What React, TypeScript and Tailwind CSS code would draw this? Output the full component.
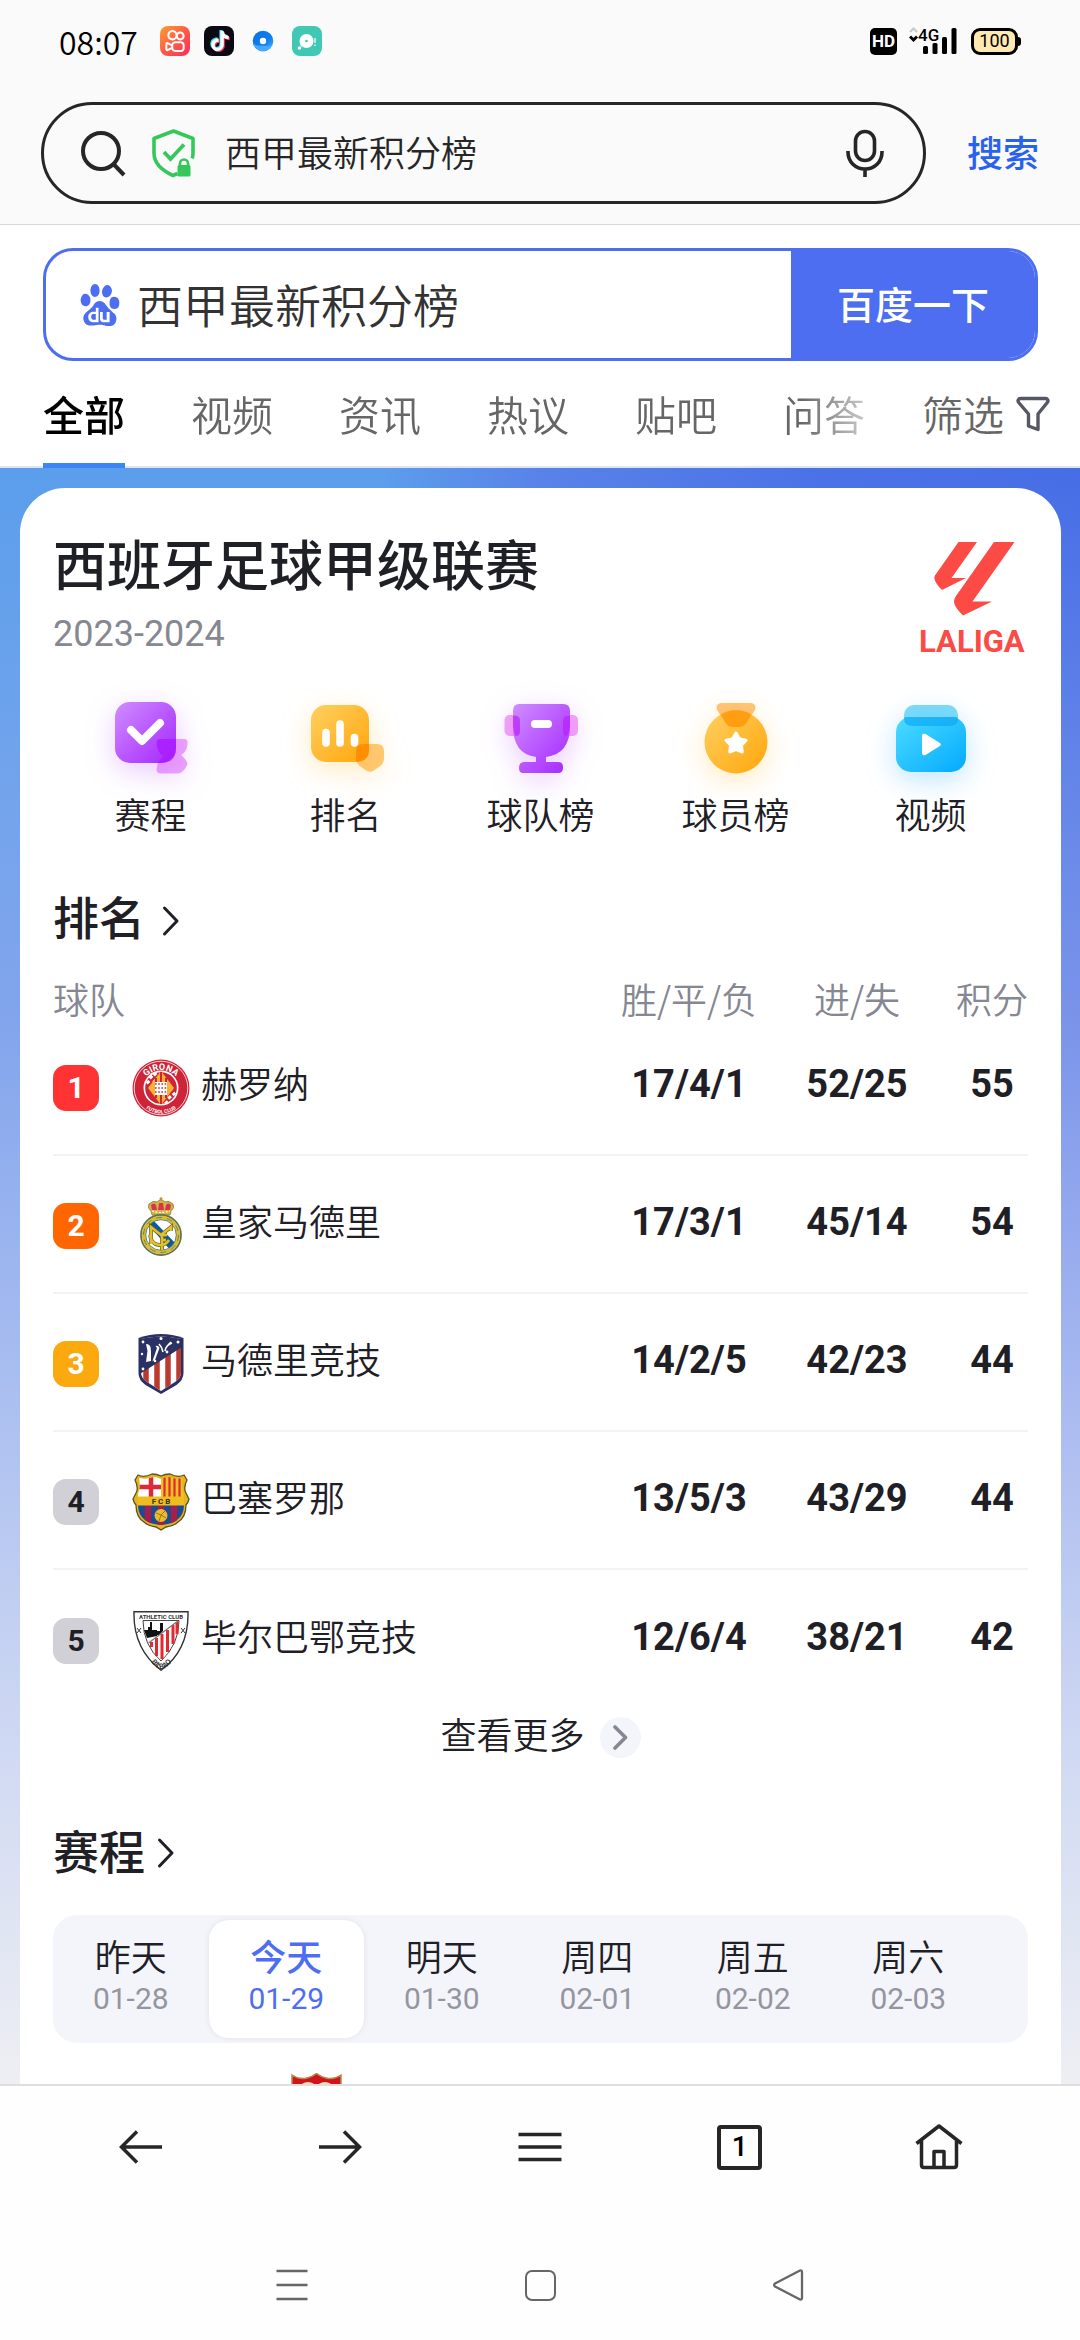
import type { ReactNode } from "react";
import { SiBaidu, SiKuaishou, SiTiktok } from "react-icons/si";

function StatusBar() {
  return (
    <div className="flex h-[82px] items-center justify-between pr-[59px] pl-[59px] text-black">
      <div className="flex items-center">
        <span className="text-[32px] leading-10">08:07</span>
        <div className="ml-[22px] flex items-center gap-[14px]">
          <span className="flex size-[30px] items-center justify-center rounded-lg bg-linear-to-br from-[#ff9a2e] via-[#ff5a44] to-[#ff1f5a]">
            <SiKuaishou className="size-[22px] text-white" />
          </span>
          <span className="relative flex size-[30px] items-center justify-center rounded-lg bg-[#0b0a14]">
            <SiTiktok className="absolute top-[4px] left-[5px] size-[20px] text-[#25f4ee]" />
            <SiTiktok className="absolute top-[6px] left-[7px] size-[20px] text-[#fe2c55]" />
            <SiTiktok className="absolute top-[5px] left-[6px] size-[20px] text-white" />
          </span>
          <svg className="size-[30px]" viewBox="0 0 30 30">
            <defs>
              <linearGradient id="blueDisc" x1="0" y1="0" x2="1" y2="1">
                <stop offset="0" stopColor="#0f6fe0" />
                <stop offset="0.6" stopColor="#0d7ff0" />
                <stop offset="1" stopColor="#4fb4ff" />
              </linearGradient>
            </defs>
            <circle cx="15" cy="15" r="10.300" fill="url(#blueDisc)" />
            <path d="M5 17c3 4 9 2 13 3 3 .5 5-1 6-2-1 5-5 7.300-9 7.300S6 22 5 17z" fill="#46a8ff" />
            <circle cx="15" cy="15" r="3.200" fill="#fff" />
          </svg>
          <svg className="size-[30px]" viewBox="0 0 30 30">
            <rect width="30" height="30" rx="8" fill="#40c8b4" />
            <circle cx="14.500" cy="15" r="7" fill="#fff" />
            <circle cx="7.500" cy="22" r="1.800" fill="#fff" />
            <path d="M9 20l2-2" stroke="#fff" strokeWidth="2" />
            <circle cx="14.500" cy="15" r="1.300" fill="#40c8b4" />
            <path d="M23 12v5M23 18.500v1.500" stroke="#fff" strokeWidth="1.200" />
          </svg>
        </div>
      </div>
      <div className="flex items-center">
        <span className="flex h-[27px] w-[27px] items-center justify-center rounded-[5px] bg-black font-['Roboto',sans-serif] text-[17px] leading-none font-bold text-white">
          HD
        </span>
        <svg className="ml-[12px] h-[40px] w-[50px]" viewBox="0 -6 50 40">
          <path d="M1 5l3.500-3.500L8 5" fill="none" stroke="#c9c9c9" strokeWidth="2.200" />
          <path d="M1 9.500L4.500 13 8 9.500" fill="none" stroke="#000" strokeWidth="3" />
          <text x="9" y="14" fontFamily="Roboto, sans-serif" fontSize="17" fontWeight="500">4G</text>
          <rect x="14" y="19" width="5" height="8" rx="1.500" />
          <rect x="23.500" y="16" width="5" height="11" rx="1.500" />
          <rect x="33" y="10" width="5" height="17" rx="1.500" />
          <rect x="42.500" y="1" width="5" height="26" rx="1.500" />
        </svg>
        <div className="ml-[12px] flex items-center">
          <span className="flex h-[27px] w-[47px] items-center justify-center rounded-[9px] border-[3px] border-black bg-[#ffe9b3] font-['Roboto',sans-serif] text-[18px] leading-none font-normal">
            100
          </span>
          <span className="h-[9px] w-[3px] rounded-r-sm bg-black" />
        </div>
      </div>
    </div>
  );
}

function BrowserBar() {
  return (
    <div className="flex items-center pt-5 pb-5 pl-[41px]">
      <label className="flex h-[102px] flex-1 items-center rounded-full border-[3px] border-[#262626] pr-[38px] pl-[37px]">
        <svg className="size-[48px] shrink-0" viewBox="0 0 48 48" fill="none" stroke="#262626" strokeWidth="4">
          <circle cx="20" cy="22" r="18" />
          <path d="M32 34.500L43 46" />
        </svg>
        <svg className="ml-[22px] h-[50px] w-[46px] shrink-0" viewBox="0 0 46 50">
          <path
            d="M26.500 45.500L22 47.500C10 42 3 35 3 25V10.500L22.500 3 42 10.500V25c0 2-.3 4-.8 5.500"
            fill="none"
            stroke="#35c759"
            strokeWidth="3.600"
            strokeLinejoin="round"
          />
          <path d="M13 24l6.500 7L33 16.500" fill="none" stroke="#35c759" strokeWidth="3.800" />
          <path d="M29 38v-2.500a4 4 0 0 1 8 0V38" fill="none" stroke="#35c759" strokeWidth="2.600" />
          <rect x="26.500" y="37" width="13" height="11.500" rx="1.500" fill="#35c759" />
        </svg>
        <input
          type="text"
          aria-label="网址或搜索词"
          defaultValue="西甲最新积分榜"
          className="ml-[28px] h-[54px] min-w-0 flex-1 bg-transparent pb-1 text-[36px] leading-[50px] text-[#262626] outline-none"
        />
        <button type="button" aria-label="语音搜索">
          <svg className="h-[50px] w-[40px]" viewBox="0 0 40 50" fill="none" stroke="#262626" strokeWidth="3.600">
            <rect x="10.500" y="3.500" width="19" height="29" rx="9.500" />
            <path d="M3 23v1c0 10 7.500 17 17 17s17-7 17-17v-1M20 41v8" />
          </svg>
        </button>
      </label>
      <button type="button" className="w-[154px] pb-1 text-center text-[36px] leading-[50px] font-medium text-[#2a62ee]">
        搜索
      </button>
    </div>
  );
}

function BaiduSearch() {
  return (
    <form className="mt-[23px] mr-[42px] ml-[43px] flex h-[113px] overflow-hidden rounded-[30px] border-[3px] border-[#4e6ef2] bg-white">
      <label className="flex min-w-0 flex-1 items-center pl-[33px]">
        <SiBaidu className="size-[42px] shrink-0 text-[#4e6ef2]" />
        <input
          type="text"
          aria-label="百度搜索"
          defaultValue="西甲最新积分榜"
          className="ml-[16px] min-w-0 flex-1 bg-transparent pb-1 text-[46px] leading-[66px] text-[#333] outline-none"
        />
      </label>
      <button type="submit" className="w-[244px] bg-[#4e6ef2] pb-1 text-[38px] leading-[60px] font-medium text-white">
        百度一下
      </button>
    </form>
  );
}

function Tabs() {
  return (
    <div className="flex h-[107px] shadow-[inset_0_-2px_0_#dfe4ee]">
      <nav className="flex min-w-0 flex-1 gap-[66px] overflow-hidden [mask-image:linear-gradient(to_right,black_800px,transparent_900px)] pl-[43px] text-[41px] whitespace-nowrap text-[#666]">
        <a href="#all" className="flex items-center border-b-[5px] border-[#3a86f5] pt-[3px] font-medium text-black">
          全部
        </a>
        {["视频", "资讯", "热议", "贴吧", "问答"].map((t) => (
          <a key={t} href={"#" + t} className="flex items-center pb-[2px]">
            {t}
          </a>
        ))}
      </nav>
      <button type="button" className="flex items-center pr-[29px] pb-[2px] pl-[20px] text-[41px] text-[#666]">
        筛选
        <svg className="ml-[11px] size-[36px]" viewBox="0 0 36 36" fill="none" stroke="#555862" strokeWidth="3.400" strokeLinejoin="round">
          <path d="M5.500 2.500h25c2.200 0 3.200 2.400 1.800 4L23 18v15.500L13.500 30V18L3.700 6.500c-1.400-1.600-.4-4 1.800-4z" />
        </svg>
      </button>
    </div>
  );
}

function LaLigaLogo() {
  return (
    <svg className="mt-[12px] h-[126px] w-[116px]" viewBox="0 0 116 126" fill="#fc4a45" role="img" aria-label="LALIGA">
      <path d="M46.500 2H65L39.500 38H54L30 50C24 44 20 38 24 34z" />
      <path d="M82 2h20.500L60.500 61.500H80L51 75.500C42 66 40 62 44 56z" />
      <text x="7" y="112" fontFamily="Roboto, sans-serif" fontWeight="700" fontSize="31">LALIGA</text>
    </svg>
  );
}

function Grad({ id, from, to }: { id: string; from: string; to: string }) {
  return (
    <defs>
      <linearGradient id={id} x1="0" y1="0" x2="1" y2="1">
        <stop offset="0" stopColor={from} />
        <stop offset="1" stopColor={to} />
      </linearGradient>
    </defs>
  );
}

const purpleGlow = "size-[76px] overflow-visible drop-shadow-[0_8px_14px_rgba(180,70,255,0.28)]";
const amberGlow = "size-[76px] overflow-visible drop-shadow-[0_8px_14px_rgba(255,180,30,0.28)]";
const blueGlow = "size-[76px] overflow-visible drop-shadow-[0_8px_14px_rgba(20,160,255,0.28)]";

const shortcuts: { label: string; icon: ReactNode }[] = [
  {
    label: "赛程",
    icon: (
      <svg className={purpleGlow} viewBox="0 0 76 76">
        <Grad id="gA" from="#cf8dff" to="#a526ff" />
        <rect x="2" y="2" width="61" height="61" rx="15" fill="url(#gA)" />
        <path
          d="M47 39h24q4 0 3.600 5-.8 8-6.600 11 6 5 6.600 9-4 9-9.600 9.500H48q-4.500 0-4.500-4.500 1-8 6.500-13-6-4-6.500-13 0-4 3.500-4z"
          fill="#d84bff"
          fillOpacity="0.5"
        />
        <path d="M47 39h16v9q0 15-15 15h-3q2-4 5-7-6-4-6.500-13 0-4 3.500-4z" fill="#9a0cff" fillOpacity="0.6" />
        <path d="M18 30l11 11 18-18" fill="none" stroke="#fff" strokeWidth="8" strokeLinecap="round" strokeLinejoin="round" />
      </svg>
    ),
  },
  {
    label: "排名",
    icon: (
      <svg className={amberGlow} viewBox="0 0 76 76">
        <Grad id="gB" from="#ffd061" to="#ffa60a" />
        <rect x="3" y="5" width="58" height="57" rx="15" fill="url(#gB)" />
        <path d="M55 44h14q7 0 7 7v7q0 6-5 9l-6 4q-3 1.500-6 0l-6-4q-5-3-5-9v-7q0-7 7-7z" fill="#ffa71a" fillOpacity="0.6" />
        <path d="M55 44h6v6q0 12-13 12v-11q0-7 7-7z" fill="#ff8a00" fillOpacity="0.85" />
        <path d="M18 32.500V43M32 24v19M46.500 37.500V43" stroke="#fff" strokeWidth="7.600" strokeLinecap="round" />
      </svg>
    ),
  },
  {
    label: "球队榜",
    icon: (
      <svg className={purpleGlow} viewBox="0 0 76 76">
        <Grad id="gC" from="#cf8dff" to="#a526ff" />
        <path
          d="M16 4h44q7 0 7 7v15q0 28-24 31v5h12q5 0 5 5v1q0 5-5 5H20q-4 0-4-5 0-6 5-6h12v-5Q10 54 10 26V11q0-7 6-7z"
          fill="url(#gC)"
        />
        <rect x="1.500" y="15" width="15.500" height="21" rx="5" fill="#e23cf0" fillOpacity="0.45" />
        <rect x="59.500" y="15" width="15.500" height="21" rx="5" fill="#e23cf0" fillOpacity="0.45" />
        <path d="M10 16h2q5 0 5 5v10q0 5-4 5-3-5-3-12zM67 16h-2q-5 0-5 5v10q0 5 4 5 3-5 3-12z" fill="#9a0cff" fillOpacity="0.4" />
        <rect x="28" y="20" width="21" height="8" rx="4" fill="#fff" />
      </svg>
    ),
  },
  {
    label: "球员榜",
    icon: (
      <svg className={amberGlow} viewBox="0 0 76 76">
        <Grad id="gD" from="#ffd061" to="#ffa60a" />
        <circle cx="38" cy="42" r="31.500" fill="url(#gD)" />
        <path d="M23 3h30q6 1 4 7l-9 14q-2 3-5 3H33q-3 0-5-3l-9-14q-2-6 4-7z" fill="#ff9c1a" fillOpacity="0.6" />
        <path d="M23 14q15-8 30 0l-6 10q-2 3-5 3h-8q-3 0-5-3z" fill="#ff9500" fillOpacity="0.6" />
        <path
          d="M38 33l3.300 5.800 6.700 1.400-4.500 5 .7 6.800-6.200-2.700-6.200 2.700.7-6.800-4.500-5 6.700-1.400z"
          fill="#fff"
          stroke="#fff"
          strokeWidth="3"
          strokeLinejoin="round"
        />
      </svg>
    ),
  },
  {
    label: "视频",
    icon: (
      <svg className={blueGlow} viewBox="0 0 76 76">
        <Grad id="gE" from="#4bdcff" to="#04a9ff" />
        <rect x="11" y="5" width="54" height="21" rx="10" fill="#3cc6f8" fillOpacity="0.65" />
        <rect x="3" y="17" width="70" height="55" rx="15" fill="url(#gE)" />
        <path d="M12 17h52q1 0 1 1 0 8-9 8H20q-9 0-9-8 0-1 1-1z" fill="#06a4f5" fillOpacity="0.6" />
        <path d="M30 36v17q0 2 2 1l14-8.500q1.500-1 0-2L32 35q-2-1-2 1z" fill="#fff" stroke="#fff" strokeWidth="2" />
      </svg>
    ),
  },
];

function GironaCrest() {
  return (
    <svg viewBox="0 0 58 60" className="h-[60px] w-[58px]">
      <defs>
        <path id="girTop" d="M9 32a20 20 0 0 1 40 0" />
        <path id="girBot" d="M3.500 30a25.500 25.500 0 0 0 51 0" />
      </defs>
      <circle cx="29" cy="30" r="28.500" fill="#cf2338" />
      <circle cx="29" cy="30" r="26.800" fill="none" stroke="#fff" strokeWidth="0.800" />
      <circle cx="29" cy="30" r="17.500" fill="#fff" />
      <circle cx="29" cy="30" r="15.800" fill="#cf2338" />
      <path d="M18 18l22 24M22 15l21 22M15 23l20 22" stroke="#fff" strokeWidth="3.500" strokeDasharray="3 2.500" />
      <path d="M29 13l13 17-13 17-13-17z" fill="#f6b333" />
      <path d="M24 20v20M29 14v32M34 20v20" stroke="#cf2338" strokeWidth="2" />
      <rect x="23" y="24" width="12" height="13" fill="#fff" />
      <path d="M23 26h12M23 30h12M23 34h12" stroke="#cf2338" strokeWidth="1.600" strokeDasharray="1.600 1.600" />
      <text fontFamily="Roboto, sans-serif" fontSize="9" fontWeight="700" fill="#fff" textAnchor="middle">
        <textPath href="#girTop" startOffset="50%">GIRONA</textPath>
      </text>
      <text fontFamily="Roboto, sans-serif" fontSize="5" fontWeight="700" fill="#fff" textAnchor="middle">
        <textPath href="#girBot" startOffset="50%">FUTBOL CLUB</textPath>
      </text>
    </svg>
  );
}

function RealMadridCrest() {
  return (
    <svg viewBox="0 0 58 60" className="h-[60px] w-[58px]">
      <path d="M17 8q4-4 8-2l4-3 4 3q4-2 8 2 2 4-2 7l-1 4H20l-1-4q-4-3-2-7z" fill="#d0b548" stroke="#8a7a35" strokeWidth="0.800" />
      <path d="M19 9q3-3 5 0l1 5h-5zM39 9q-3-3-5 0l-1 5h5zM27 7h4l1 7h-6z" fill="#d8354b" />
      <path d="M20 15q9 3 18 0" stroke="#fff" strokeWidth="1.200" fill="none" strokeDasharray="2 1.500" />
      <path d="M29 1v4M27.500 2.500h3" stroke="#b99b32" strokeWidth="1.200" />
      <circle cx="29" cy="39" r="20" fill="#fff" stroke="#5f7258" strokeWidth="1.800" />
      <path d="M15 27l6-3 24 25-6 6z" fill="#0b5a9e" />
      <circle cx="29" cy="39" r="17.300" fill="none" stroke="#dcbd28" strokeWidth="3.800" />
      <circle cx="29" cy="39" r="15.300" fill="none" stroke="#4a7480" strokeWidth="0.900" />
      <circle cx="29" cy="39" r="17.500" fill="none" stroke="#4a7480" strokeWidth="0.800" strokeDasharray="6 5" />
      <path d="M19 48V31l10 8 10-8v4M37 44q-4 6-10 5-8-1-9-10M30 38v16M28 39h7M29 44h5" fill="none" stroke="#6b6527" strokeWidth="3.800" />
      <path d="M19 48V31l10 8 10-8v4M37 44q-4 6-10 5-8-1-9-10M30 38v16M28 39h7M29 44h5" fill="none" stroke="#e2c02c" strokeWidth="2.400" />
    </svg>
  );
}

function AtleticoCrest() {
  return (
    <svg viewBox="0 0 58 60" className="h-[60px] w-[58px]">
      <defs>
        <clipPath id="atl">
          <path d="M9 5q20-5 40 0v33q0 6-6 10L29 57 15 48q-6-4-6-10z" />
        </clipPath>
      </defs>
      <path d="M6.500 4Q29-4 51.500 4v35q0 7-7 12L29 60 13.500 51q-7-5-7-12z" fill="#2a3163" />
      <g clipPath="url(#atl)">
        <rect x="6" width="46" height="60" fill="#fff" />
        <path d="M14 0v60M25 0v60M36 0v60M47 0v60" stroke="#bb3a30" strokeWidth="5.500" />
        <path d="M0 0h58v8L0 45z" fill="#2a3163" />
      </g>
      <path d="M14 28l1.500-11-1.500-7q3.500 0 4.500 3l.5 5v9zM20.500 27l4.500-13-1.500-2q3-1 4 2l-4.500 12z" fill="#fff" />
      <path d="M27 10q3 3 4 8M33 17q1-6 7-8M36 11l3-3" fill="none" stroke="#fff" strokeWidth="1.600" />
      <g fill="#fff">
        <circle cx="29" cy="4.500" r="1.500" />
        <circle cx="11" cy="8" r="1.400" />
        <circle cx="46" cy="8" r="1.500" />
        <circle cx="10" cy="20" r="1.200" />
        <circle cx="35" cy="18" r="1.400" />
        <circle cx="23" cy="27" r="1.300" />
        <circle cx="11" cy="35" r="1.400" />
      </g>
    </svg>
  );
}

const barcaShape =
  "M6 3q6 3 14-1 5 0 9 2 4-2 9-2 8 4 14 1l3 5q-4 8-1 13l3 6q-1 4-3 6 0 12-8 17-4 4-12 5l-5 3-5-3q-8-1-12-5-8-5-8-17-2-2-3-6l3-6q3-5-1-13z";

function BarcelonaCrest() {
  return (
    <svg viewBox="0 0 58 60" className="h-[60px] w-[58px]">
      <defs>
        <clipPath id="bar">
          <path d="M7 6q8 2 14-1 4 0 8 2 4-2 8-2 6 3 14 1-2 9 1 16v11q0 10-7 15-4 4-16 5-12-1-16-5-7-5-7-15V22q3-7 1-16z" />
        </clipPath>
      </defs>
      <path d={barcaShape} fill="#e5b51f" stroke="#5b5320" strokeWidth="1.300" />
      <g clipPath="url(#bar)">
        <rect width="29" height="26" fill="#fff" />
        <path d="M19 4v21M7 15h22" stroke="#dc2a3a" strokeWidth="4.500" />
        <rect x="29" width="29" height="26" fill="#f2c21e" />
        <path d="M32.500 4v21M37.500 4v21M42.500 4v21M47.500 4v21" stroke="#dc2a3a" strokeWidth="2.200" />
        <rect y="33" width="58" height="27" fill="#1c4a94" />
        <path d="M16 33v27M29 33v27M42 33v27" stroke="#a3204e" strokeWidth="6.500" />
        <rect y="24.500" width="58" height="9" fill="#edbd22" />
      </g>
      <circle cx="29" cy="43.500" r="6.500" fill="#eabb2a" />
      <path d="M24 41l5 2 4-4M29 43l-2 6M29 43l5 3" stroke="#a37a12" strokeWidth="1" fill="none" />
      <text x="29" y="32" fontFamily="Roboto, sans-serif" fontSize="8" fontWeight="700" fill="#3a3210" textAnchor="middle">
        F C B
      </text>
    </svg>
  );
}

function AthleticCrest() {
  return (
    <svg viewBox="0 0 58 60" className="h-[60px] w-[58px]">
      <defs>
        <path id="athBot" d="M14 42q7 15 15 16 9-1 16-16" />
      </defs>
      <path d="M2 .8h54q1 38-27 58.500Q1 38 2 .8z" fill="#fff" stroke="#333" strokeWidth="1.400" />
      <path d="M11 9.500h36q0 24-18 40.500Q11 34 11 9.500z" fill="#fff" stroke="#444" strokeWidth="1" />
      <path d="M46 10L17 32q5 10 12 17 15-14 17-39z" fill="#fff" />
      <path d="M19.500 31v5M24.500 27v18M30 23v25M35.500 19v22M41 14v19M45 11v12" stroke="#e02a30" strokeWidth="3" />
      <path d="M12 19h4v-3h2v-5h2v8h5v6l-10 2zM28 12h3v8l-4 4h-5v-4h6z" fill="#111" />
      <path d="M46 10L16.500 32" stroke="#777" strokeWidth="1.200" />
      <path d="M5 17l4 5M9 17l-4 5M49 17l4 5M53 17l-4 5" stroke="#333" strokeWidth="1" />
      <text x="29" y="7.500" fontFamily="Roboto, sans-serif" fontSize="6" fontWeight="700" fill="#333" textAnchor="middle">ATHLETIC CLUB</text>
      <text fontFamily="Roboto, sans-serif" fontSize="7.500" fontWeight="500" fill="#222" textAnchor="middle">
        <textPath href="#athBot" startOffset="50%">BILBAO</textPath>
      </text>
    </svg>
  );
}

const teams = [
  { name: "赫罗纳", badge: "bg-[#ff3333] text-white", crest: <GironaCrest />, wdl: "17/4/1", goals: "52/25", pts: "55" },
  { name: "皇家马德里", badge: "bg-[#ff6600] text-white", crest: <RealMadridCrest />, wdl: "17/3/1", goals: "45/14", pts: "54" },
  { name: "马德里竞技", badge: "bg-[#faa90e] text-white", crest: <AtleticoCrest />, wdl: "14/2/5", goals: "42/23", pts: "44" },
  { name: "巴塞罗那", badge: "bg-[#d0d0d6] text-[#1f2026]", crest: <BarcelonaCrest />, wdl: "13/5/3", goals: "43/29", pts: "44" },
  { name: "毕尔巴鄂竞技", badge: "bg-[#d0d0d6] text-[#1f2026]", crest: <AthleticCrest />, wdl: "12/6/4", goals: "38/21", pts: "42" },
];

function Standings() {
  return (
    <table className="mt-[34px] w-full table-fixed border-collapse">
      <colgroup>
        <col />
        <col className="w-[138px]" />
        <col className="w-[198px]" />
        <col className="w-[72px]" />
      </colgroup>
      <thead>
        <tr className="h-[38px] text-[36px] leading-[38px] whitespace-nowrap text-[#858791]">
          <th className="p-0 text-left font-[350]">球队</th>
          <th className="p-0 text-center font-[350]">胜/平/负</th>
          <th className="p-0 text-center font-[350]">进/失</th>
          <th className="p-0 text-center font-[350]">积分</th>
        </tr>
      </thead>
      <tbody>
        {teams.map((t, rank) => (
          <tr key={t.name} className="h-[138px] border-b-2 border-[#f3f3f5] last:border-b-0">
            <td className="p-0">
              <div className="flex items-center pt-1">
                <span className={"flex size-[46px] items-center justify-center rounded-[13px] font-['Roboto',sans-serif] text-[30px] leading-none font-bold " + t.badge}>
                  {rank + 1}
                </span>
                <span className="ml-[33px]">{t.crest}</span>
                <span className="ml-[11px] pb-[12px] text-[36px] leading-[50px] text-[#1f2026]">{t.name}</span>
              </div>
            </td>
            {[t.wdl, t.goals, t.pts].map((v, i) => (
              <td key={i} className="p-0 pb-1 text-center font-['Roboto',sans-serif] text-[38px] leading-[50px] font-bold text-[#1f2026]">
                {v}
              </td>
            ))}
          </tr>
        ))}
      </tbody>
    </table>
  );
}

function Chevron() {
  return (
    <svg className="h-[32px] w-[18px]" viewBox="0 0 18 32" fill="none" stroke="#1f2026" strokeWidth="3" strokeLinecap="round" strokeLinejoin="round">
      <path d="M2.500 3L15 16 2.500 29" />
    </svg>
  );
}

const days = [
  { label: "昨天", date: "01-28" },
  { label: "今天", date: "01-29", active: true },
  { label: "明天", date: "01-30" },
  { label: "周四", date: "02-01" },
  { label: "周五", date: "02-02" },
  { label: "周六", date: "02-03" },
];

function LeagueCard() {
  return (
    <section className="rounded-t-[45px] bg-white px-[33px] pt-[40px]">
      <header className="flex h-[130px] justify-between">
        <div>
          <h1 className="text-[54px] leading-[70px] font-medium text-[#1f2026]">西班牙足球甲级联赛</h1>
          <p className="mt-3 font-['Roboto',sans-serif] text-[36px] leading-[48px] font-normal text-[#858791]">2023-2024</p>
        </div>
        <LaLigaLogo />
      </header>

      <nav className="mt-[42px] grid grid-cols-5">
        {shortcuts.map((s) => (
          <a key={s.label} href={"#" + s.label} className="flex flex-col items-center">
            {s.icon}
            <span className="mt-3 text-[36px] leading-[50px] text-[#1f2026]">{s.label}</span>
          </a>
        ))}
      </nav>

      <h2 className="mt-[47px] text-[46px] leading-[60px] font-medium text-[#1f2026]">
        <a href="#ranking" className="flex items-center gap-[17px]">
          排名
          <span className="pt-3">
            <Chevron />
          </span>
        </a>
      </h2>
      <Standings />

      <button type="button" className="mx-auto mt-[5px] flex items-center gap-[15px] text-[36px] leading-[42px] text-[#1f2026]">
        <span className="pb-2">查看更多</span>
        <span className="flex size-[41px] items-center justify-center rounded-full bg-[#f4f5fa]">
          <svg className="h-[26px] w-[16px]" viewBox="0 0 16 26" fill="none" stroke="#858791" strokeWidth="3.600" strokeLinecap="round" strokeLinejoin="round">
            <path d="M3 3l10.500 10.500L3 24" />
          </svg>
        </span>
      </button>

      <h2 className="mt-[57px] text-[46px] leading-[60px] font-medium text-[#1f2026]">
        <a href="#schedule" className="flex items-center gap-[12px]">
          赛程
          <span className="pt-2">
            <Chevron />
          </span>
        </a>
      </h2>
      <div className="mt-9 grid h-[128px] grid-cols-6 rounded-[24px] bg-[#f4f5fa] py-[5px] pr-[42px]">
        {days.map((d) => (
          <button
            key={d.date}
            type="button"
            className={
              d.active
                ? "flex flex-col items-center rounded-[20px] bg-white pt-[13px] text-[#4e6ef2] shadow-[0_0_6px_rgba(0,0,0,0.08)]"
                : "flex flex-col items-center pt-[13px] text-[#1f2026]"
            }
          >
            <span className={d.active ? "text-[36px] leading-[44px] font-medium" : "text-[36px] leading-[44px]"}>{d.label}</span>
            <span className={"font-['Roboto',sans-serif] text-[30px] leading-[44px] font-normal " + (d.active ? "" : "text-[#9495a0]")}>{d.date}</span>
          </button>
        ))}
      </div>

      <svg className="mt-[30px] ml-[238px] h-[60px] w-[51px]" viewBox="0 0 51 60">
        <path d="M1 2q7 5 15 3 5-1 9.500-4.500Q30 4 35 5q8 2 15-3v30q0 14-24.500 27Q1 46 1 32z" fill="#d1141b" stroke="#b58a4a" strokeWidth="1.500" />
        <ellipse cx="17" cy="15" rx="8" ry="6" fill="#f3dcb8" />
        <ellipse cx="34" cy="15" rx="8" ry="6" fill="#f3dcb8" />
      </svg>
    </section>
  );
}

function BottomBars() {
  return (
    <footer className="border-t-2 border-[#dedede] bg-[#fefefe]">
      <nav className="grid h-[122px] grid-cols-5 items-center px-[41px] [&>button]:flex [&>button]:justify-center">
        <button type="button" aria-label="后退">
          <svg className="size-[48px]" viewBox="0 0 48 48" fill="none" stroke="#262626" strokeWidth="3.500">
            <path d="M20 8.500L4.500 24 20 39.500M4.500 24H45" />
          </svg>
        </button>
        <button type="button" aria-label="前进">
          <svg className="size-[48px]" viewBox="0 0 48 48" fill="none" stroke="#262626" strokeWidth="3.500">
            <path d="M28 8.500L43.500 24 28 39.500M43.500 24H3" />
          </svg>
        </button>
        <button type="button" aria-label="菜单">
          <svg className="size-[48px]" viewBox="0 0 48 48" stroke="#262626" strokeWidth="3.500">
            <path d="M2.500 11.500h43M2.500 24h43M2.500 36.500h43" />
          </svg>
        </button>
        <button type="button" aria-label="标签页">
          <span className="flex size-[45px] items-center justify-center rounded-[4px] border-4 border-[#262626] font-['Roboto',sans-serif] text-[28px] leading-none font-medium text-black">
            1
          </span>
        </button>
        <button type="button" aria-label="主页">
          <svg className="size-[48px]" viewBox="0 0 48 48" fill="none" stroke="#262626" strokeWidth="3.500" strokeLinejoin="round">
            <path d="M1.500 20.500L24 3l22.500 17.500M6.500 17.500V42q0 2.500 2.500 2.500h30q2.500 0 2.500-2.500V17.500" />
            <path d="M19 44V28.500h10V44" />
          </svg>
        </button>
      </nav>
      <div className="mx-auto grid h-[132px] w-[744px] grid-cols-3 items-center pt-[22px] [&>button]:flex [&>button]:justify-center">
        <button type="button" aria-label="最近任务">
          <svg className="size-[34px]" viewBox="0 0 34 34" stroke="#666" strokeWidth="2.500">
            <path d="M1.500 3h31M1.500 17h31M1.500 31h31" />
          </svg>
        </button>
        <button type="button" aria-label="桌面">
          <span className="size-[31px] rounded-[7px] border-2 border-[#666]" />
        </button>
        <button type="button" aria-label="返回">
          <svg className="size-[34px]" viewBox="0 0 34 34" fill="none" stroke="#666" strokeWidth="2.300" strokeLinejoin="round">
            <path d="M29 2.500L4 15.500q-1.800 1.500 0 3L29 31.500q2 .5 2-1.500V4q0-2-2-1.500z" />
          </svg>
        </button>
      </div>
    </footer>
  );
}

export default function App() {
  return (
    <div className="flex h-screen flex-col overflow-hidden bg-white font-['Noto_Sans_CJK_SC',sans-serif] font-[350]">
      <div className="shrink-0 border-b border-[#d8d8d8] bg-[#fafafa]">
        <StatusBar />
        <BrowserBar />
      </div>
      <main className="flex min-h-0 flex-1 flex-col">
        <div className="shrink-0">
          <BaiduSearch />
          <Tabs />
        </div>
        <div className="min-h-0 flex-1 overflow-hidden bg-[linear-gradient(to_bottom,rgba(150,172,236,0)_0%,rgba(150,172,236,0.450)_23%,rgba(150,168,236,0.650)_34%,rgba(172,188,240,0.850)_51%,#d1daf3_80%,#eeeff3_100%),linear-gradient(to_right,#5b9eec_0%,#5b9eec_35%,#5882e8_50%,#4a72e7_75%,#466de6_100%)] pt-5 pr-[19px] pl-5">
          <LeagueCard />
        </div>
      </main>
      <BottomBars />
    </div>
  );
}
